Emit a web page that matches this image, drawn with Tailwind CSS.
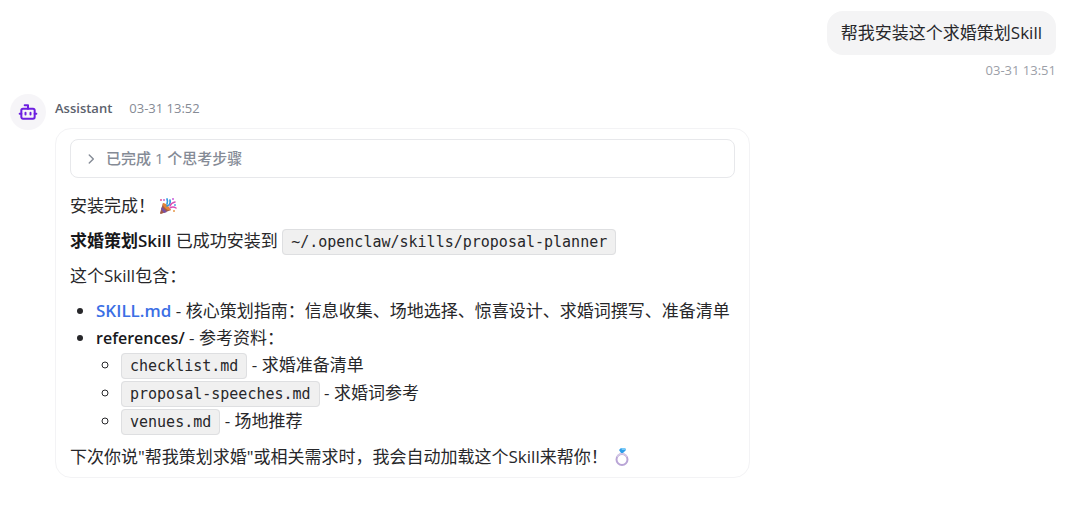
<!DOCTYPE html>
<html lang="zh-CN">
<head>
<meta charset="utf-8">
<meta name="viewport" content="width=device-width, initial-scale=1">
<title>Assistant</title>
<script src="https://cdn.jsdelivr.net/npm/@tailwindcss/browser@4"></script>
</head>
<body class="bg-white font-['Open_Sans','Noto_Sans_CJK_SC',sans-serif] text-[17px] leading-[27px] text-[#27272a]">
<main class="flex flex-col pt-[11px] pr-6 pl-[10px]">
  <section class="flex flex-col items-end">
    <p class="rounded-2xl rounded-br-lg bg-[#f4f4f5] px-[14px] pt-2 pb-[9px]">帮我安装这个求婚策划Skill</p>
    <time class="mt-[3px] text-[13px] leading-6 text-[#9ca0a8]">03-31 13:51</time>
  </section>

  <section class="mt-1 flex items-start gap-[9px]">
    <div class="mt-2 flex size-9 shrink-0 items-center justify-center rounded-full bg-[#f6f5f8]">
      <svg class="size-5" viewBox="0 0 24 24" fill="none" stroke="#6d1fe0" stroke-width="2.4" stroke-linecap="round" stroke-linejoin="round" aria-hidden="true"><path d="M12 8V4H8"/><rect x="4" y="8" width="16" height="12" rx="2"/><path d="M2 14h2M20 14h2M15 13v2M9 13v2"/></svg>
    </div>
    <div class="w-full max-w-[695px]">
      <header class="mt-[10px] flex items-center gap-[17px] text-[13px] leading-6 text-[#868b95]">
        <h2 class="font-semibold text-[#5b616c]">Assistant</h2>
        <time>03-31 13:52</time>
      </header>
      <article class="mt-2 flex flex-col gap-2 rounded-2xl border border-[#f3f3f5] px-[14px] pt-[10px] pb-[7px]">
        <button type="button" class="mb-[6px] flex h-[39px] items-center gap-2 rounded-lg border border-[#e7e8eb] px-[13px] text-left text-[15px] font-medium text-[#858b96]">
          <svg class="size-[14px]" viewBox="0 0 24 24" fill="none" stroke="currentColor" stroke-width="2.4" stroke-linecap="round" stroke-linejoin="round" aria-hidden="true"><path d="m9 19 7-7-7-7"/></svg>
          <span>已完成 1 个思考步骤</span>
        </button>
        <p class="flex items-center gap-1">安装完成！
          <svg class="size-[18px]" viewBox="0 0 18 18" fill="none" role="img" aria-label="庆祝"><path d="M4 6 1 16q0 1 1 1l10-4Z" fill="#a65b45"/><path d="m3 10 5 5-3 1-3-4Z" fill="#7650a6"/><path d="M4 6q4 0 8 7-3 1-6-2T4 6Z" fill="#e58436"/><path d="M8 7q1-3 0-5M8 9q4-1 3-6" stroke="#319be0" stroke-width="1.7" stroke-linecap="round"/><path d="M11 9q1-3 5-4M11 11q3-2 6 0" stroke="#d94eb5" stroke-width="1.5" stroke-linecap="round"/><circle cx="2" cy="3" r="1" fill="#e44f99"/><circle cx="5" cy="3" r="1" fill="#bf68d8"/><circle cx="14" cy="2" r="1" fill="#c95fd9"/><circle cx="15" cy="14" r="1" fill="#e79a4d"/><circle cx="16" cy="8" r="1" fill="#4fa8e6"/></svg>
        </p>
        <p><strong class="font-semibold text-[#18181b]">求婚策划Skill</strong> 已成功安装到 <code class="rounded border border-[#dedfe1] bg-[#f0f0f0] px-2 py-[3px] font-['DejaVu_Sans_Mono',monospace] text-[15px] leading-none">~/.openclaw/skills/proposal-planner</code></p>
        <p>这个Skill包含：</p>
        <ul class="list-disc pl-[26px] marker:text-[#27272a]">
          <li class="whitespace-nowrap"><a href="#" class="font-semibold text-[#3b6fe5]">SKILL.md</a> - 核心策划指南：信息收集、场地选择、惊喜设计、求婚词撰写、准备清单</li>
          <li><strong class="text-base leading-none font-semibold text-[#18181b]">references/</strong> - 参考资料：
            <ul class="list-[circle] pl-[25px] leading-7">
              <li><code class="rounded border border-[#dedfe1] bg-[#f0f0f0] px-2 py-[3px] font-['DejaVu_Sans_Mono',monospace] text-[15px] leading-none">checklist.md</code> - 求婚准备清单</li>
              <li><code class="rounded border border-[#dedfe1] bg-[#f0f0f0] px-2 py-[3px] font-['DejaVu_Sans_Mono',monospace] text-[15px] leading-none">proposal-speeches.md</code> - 求婚词参考</li>
              <li><code class="rounded border border-[#dedfe1] bg-[#f0f0f0] px-2 py-[3px] font-['DejaVu_Sans_Mono',monospace] text-[15px] leading-none">venues.md</code> - 场地推荐</li>
            </ul>
          </li>
        </ul>
        <p class="flex items-center gap-[5px]">下次你说"帮我策划求婚"或相关需求时，我会自动加载这个Skill来帮你！
          <svg class="size-[18px]" viewBox="0 0 18 18" fill="none" role="img" aria-label="戒指"><circle cx="9" cy="11.5" r="5.5" stroke="#b9a5d6" stroke-width="2"/><path d="M4 9a5.5 5.5 0 0 1 10 0" stroke="#d3c8e5" stroke-width="1.5"/><path d="m6 2 2-2h4l1 2-3 3H8Z" fill="#2e9ee9"/><path d="m8 0 1 2h4l-1-2Z" fill="#79c9f7"/></svg>
        </p>
      </article>
    </div>
  </section>
</main>
</body>
</html>
